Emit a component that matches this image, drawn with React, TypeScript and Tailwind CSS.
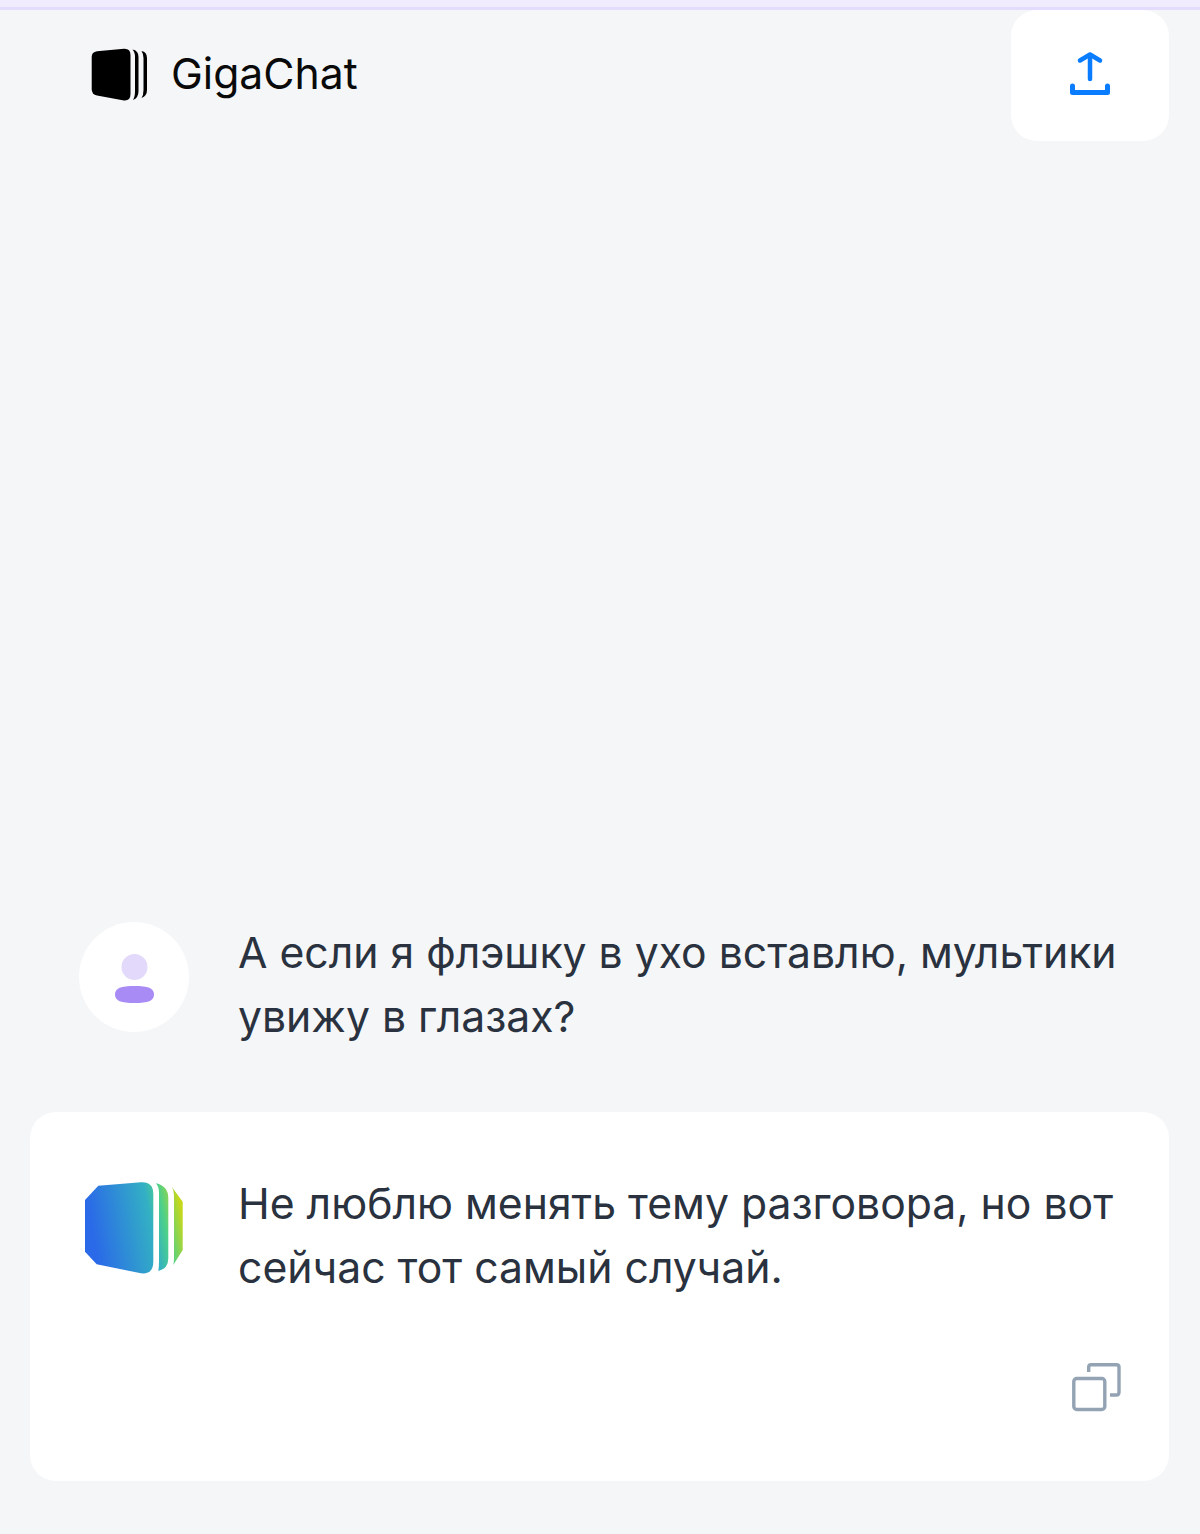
export default function App() {
  return (
    <div className="flex flex-col h-[1534px] bg-[#f5f6f8] font-['Inter',sans-serif] overflow-hidden">
      {/* Top strip */}
      <div className="h-[10px] shrink-0 bg-[#f0ebfd] border-b-[3px] border-[#e4dcfc]"></div>

      {/* Header */}
      <header className="flex justify-between items-start pl-[91px] pr-[31px] shrink-0">
        <div className="flex items-center gap-[23px] h-[129px]">
          <svg width="57" height="54" viewBox="0 0 57 54" className="block -mt-[2px]">
            <path d="M6 4.2 L33 1.8 Q39.5 1.5 39.5 8 V47 Q39.5 54 33 53.5 L6 48.5 Q0.7 47.5 0.7 42 V10 Q0.7 5 6 4.2 Z" fill="#000" />
            <path d="M41.5 2.5 Q47.5 3.5 47.5 10 V44 Q47.5 51 42 53 Q44 50 44 44 V10 Q44 5 41.5 2.5 Z" fill="#000" />
            <path d="M50.5 4 Q56 5 56 11 V43 Q56 49 50.5 51 Q52.5 48 52.5 43 V11 Q52.5 7 50.5 4 Z" fill="#000" />
          </svg>
          <span className="text-[42.7px] leading-none text-[#0a0a0a]">GigaChat</span>
        </div>
        <button className="flex items-center justify-center w-[158px] h-[131px] pb-[5px] bg-white rounded-[26px]">
          <svg width="42" height="46" viewBox="0 0 42 46" fill="none" stroke="#0a7cff" strokeLinecap="round" strokeLinejoin="round" className="block">
            <path d="M11 10.5 L21 4.5 L31 10.5" strokeWidth="4.5" />
            <path d="M21 5 V29" strokeWidth="4.5" />
            <path d="M3.5 36 V42.5 H38.5 V36" strokeWidth="5" />
          </svg>
        </button>
      </header>

      <div className="flex-1"></div>

      {/* User message */}
      <div className="flex pl-[79px] pr-[60px] mb-[63px] gap-[49px]">
        <div className="flex items-center justify-center w-[110px] h-[110px] mt-[1px] pt-[2px] shrink-0 bg-white rounded-full">
          <svg width="41" height="50" viewBox="0 0 41 50" className="block">
            <circle cx="20.5" cy="14" r="13" fill="#e3d9fb" />
            <path d="M1 41.5 C1 35 7 33 20.5 33 C34 33 40 35 40 41.5 C40 48 34 50 20.5 50 C7 50 1 48 1 41.5 Z" fill="#a98bf5" />
          </svg>
        </div>
        <p className="text-[42.7px] leading-[64px] text-[#29323e]">
          А если я флэшку в ухо вставлю, мультики увижу в глазах?
        </p>
      </div>

      {/* Answer card */}
      <div className="ml-[30px] mr-[31px] mb-[53px] bg-white rounded-[26px] pt-[60px] pb-[69px]">
        <div className="flex pl-[55px] pr-[49px] gap-[53px]">
          <svg width="100" height="94" viewBox="0 0 100 94" className="block shrink-0 mt-[10px]">
            <defs>
              <linearGradient id="giga" gradientUnits="userSpaceOnUse" x1="8" y1="55" x2="98" y2="38">
                <stop offset="0" stopColor="#2a69e8" />
                <stop offset="0.65" stopColor="#33b0c4" />
                <stop offset="0.8" stopColor="#4dd08a" />
                <stop offset="1" stopColor="#c5d81c" />
              </linearGradient>
            </defs>
            <path d="M13.3 3.7 L56 0.2 Q68.3 -0.5 68.3 12 V80 Q68.3 92.5 56 91.3 L11.7 82.3 L0 69.7 V18 Z" fill="url(#giga)" />
            <path d="M71 1.3 Q83.3 4 83.3 16.3 V76.3 Q83.3 87 73.3 89 Q74 85 74 79.7 V11 Q74 5 71 1.3 Z" fill="url(#giga)" />
            <path d="M86.7 4.7 L97.7 19.7 V68 L88.3 83 Q89 80 89 76 V13 Q89 8 86.7 4.7 Z" fill="url(#giga)" />
          </svg>
          <p className="text-[42.7px] leading-[64px] text-[#29323e]">
            Не люблю менять тему разговора, но вот сейчас тот самый случай.
          </p>
        </div>
        <div className="flex justify-end pr-[48px] mt-[62px]">
          <svg width="50" height="50" viewBox="0 0 50 50" fill="none" stroke="#93a3b3" strokeWidth="3.4" className="block">
            <rect x="2.8" y="16.5" width="31" height="31" rx="3" />
            <path d="M17.7 10 V5 Q17.7 2.7 20 2.7 H45.5 Q48 2.7 48 5 V30 Q48 33 45.5 33 H39" />
          </svg>
        </div>
      </div>
    </div>
  );
}
